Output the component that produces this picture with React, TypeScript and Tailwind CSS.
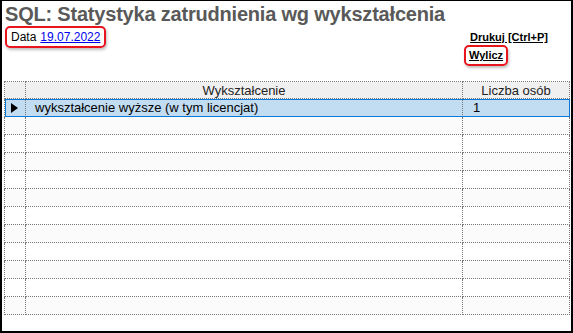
import React from "react";

const rows = Array.from({ length: 12 }, (_, i) =>
  i === 0 ? { name: "wykształcenie wyższe (w tym licencjat)", count: "1" } : { name: "", count: "" }
);

export default function App() {
  return (
    <div
      className="relative h-[333px] w-[573px] overflow-hidden border-t border-l-2 border-r-2 border-b-2 border-black bg-white text-black"
      style={{ fontFamily: '"Liberation Sans", Arial, sans-serif' }}
    >
      <h1 className="ml-[3px] mt-[1px] text-[20px] font-bold leading-[24px] tracking-[-0.2px] text-[#595959]">
        SQL: Statystyka zatrudnienia wg wykształcenia
      </h1>

      <div className="flex items-start justify-between pr-[23px]">
        <div className="ml-[3px] flex h-[22px] items-center rounded-[5px] border-2 border-[#e8141e] px-[4px] text-[12px] shadow-[1px_2px_3px_rgba(0,0,0,0.25)]">
          <span>Data</span>
          <a href="#" className="ml-[4px] text-[#0000ee] underline">
            19.07.2022
          </a>
        </div>
        <div className="mt-[5px] flex flex-col items-start text-[11px] font-bold leading-[13px]">
          <a href="#" className="ml-[6px] underline">
            Drukuj [Ctrl+P]
          </a>
          <div className="mt-[1px] flex h-[21px] items-center rounded-[5px] border-2 border-[#e8141e] px-[3px] shadow-[1px_2px_3px_rgba(0,0,0,0.25)]">
            <a href="#" className="underline">
              Wylicz
            </a>
          </div>
        </div>
      </div>

      <table className="ml-[2px] mt-[15px] w-[566px] table-fixed border-collapse text-[13px] leading-[15px]">
        <colgroup>
          <col className="w-[21px]" />
          <col className="w-[437px]" />
          <col />
        </colgroup>
        <thead>
          <tr className="h-[17px] bg-[#f0f0f0] text-[#222]">
            <th className="border border-dotted border-[#777] font-normal"></th>
            <th className="border border-dotted border-[#777] font-normal">Wykształcenie</th>
            <th className="border border-dotted border-[#777] font-normal">Liczba osób</th>
          </tr>
        </thead>
        <tbody>
          {rows.map((r, i) => {
            const selected = i === 0;
            return (
              <tr
                key={i}
                className={
                  selected
                    ? "h-[18px] bg-[#c2dcf2] outline outline-1 -outline-offset-1 outline-[#0a78d7]"
                    : i % 2 === 1
                    ? "h-[18px] bg-[#fbfbfb]"
                    : "h-[18px] bg-white"
                }
              >
                <td className="border border-dotted border-[#777] p-0">
                  {selected && (
                    <svg width="8" height="10" viewBox="0 0 8 10" className="ml-[6px]">
                      <path d="M0 0 L7 5 L0 10 Z" fill="#000" />
                    </svg>
                  )}
                </td>
                <td className="border border-dotted border-[#777] px-[9px] text-left">{r.name}</td>
                <td className="border border-dotted border-[#777] px-[10px] text-left">{r.count}</td>
              </tr>
            );
          })}
        </tbody>
      </table>
    </div>
  );
}
